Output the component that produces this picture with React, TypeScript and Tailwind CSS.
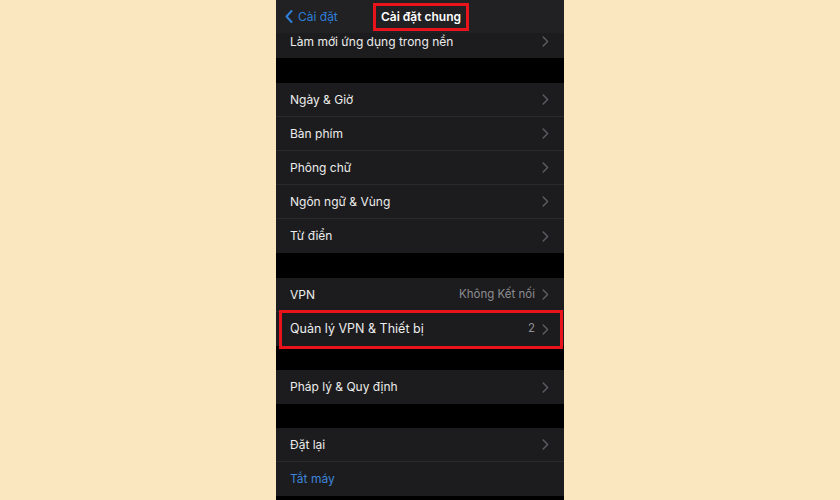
import React from "react";

const Chevron = () => (
  <svg width="7" height="11" viewBox="0 0 7 11" className="shrink-0">
    <path d="M1.2 1 L5.6 5.5 L1.2 10" fill="none" stroke="#5c5c60" strokeWidth="1.5" strokeLinecap="round" strokeLinejoin="round" />
  </svg>
);

function Row({ label, value, last, blue, h = "h-[34px]", align = "items-center", big }: { label: string; value?: string; last?: boolean; blue?: boolean; h?: string; align?: string; big?: boolean }) {
  return (
    <div className={`flex ${align} ${h} pl-[14px] pr-[15px] ${last ? "" : "border-b border-[#2a2a2c]"}`}>
      <span className={`flex-1 ${big ? "text-[12.5px]" : "text-[12px]"} ${blue ? "text-[#3d84d8]" : "text-[#ececec]"}`}>{label}</span>
      {value && <span className="text-[11.5px] text-[#8d8d92] mr-[7px]">{value}</span>}
      {!blue && <Chevron />}
    </div>
  );
}

export default function App() {
  return (
    <div className="w-[840px] h-[500px] bg-[#fbe7bf] flex justify-center overflow-hidden" style={{ fontFamily: "Inter, 'Noto Sans', sans-serif" }}>
      <div className="w-[288px] h-[500px] bg-black flex flex-col">
        {/* header */}
        <div className="h-[33px] bg-[#212123] flex items-center relative shrink-0">
          <div className="flex items-center pl-[9px] text-[#2f7fd9] text-[12px] gap-[5px]">
            <svg width="8" height="13" viewBox="0 0 8 13">
              <path d="M6.5 1 L1.5 6.5 L6.5 12" fill="none" stroke="#2f7fd9" strokeWidth="2" strokeLinecap="round" strokeLinejoin="round" />
            </svg>
            <span>Cài đặt</span>
          </div>
          <div className="absolute left-[97px] top-[3px] w-[96px] h-[28px] border-[3px] border-[#e8131b] flex items-center justify-center">
            <span className="text-[12px] font-semibold text-white">Cài đặt chung</span>
          </div>
        </div>
        <div className="bg-[#1c1c1e]">
          <div className="flex items-start h-[25px] pl-[14px] pr-[15px] pt-[1px]">
            <span className="flex-1 text-[12px] leading-[15px] text-[#ececec]">Làm mới ứng dụng trong nền</span>
            <div className="pt-[2px]"><Chevron /></div>
          </div>
        </div>
        <div className="h-[25px] shrink-0" />
        <div className="bg-[#1c1c1e]">
          <Row label="Ngày & Giờ" />
          <Row label="Bàn phím" />
          <Row label="Phông chữ" />
          <Row label="Ngôn ngữ & Vùng" />
          <Row label="Từ điển" last />
        </div>
        <div className="h-[25px] shrink-0" />
        <div className="bg-[#1c1c1e]">
          <Row label="VPN" value="Không Kết nối" />
          <div className="relative">
            <Row label="Quản lý VPN & Thiết bị" value="2" last big />
            <div className="absolute left-[3px] right-[1px] top-[-2px] bottom-[-3px] border-[3px] border-[#e8131b] pointer-events-none" />
          </div>
        </div>
        <div className="h-[24px] shrink-0" />
        <div className="bg-[#1c1c1e]">
          <Row label="Pháp lý & Quy định" last />
        </div>
        <div className="h-[24px] shrink-0" />
        <div className="bg-[#1c1c1e]">
          <Row label="Đặt lại" />
          <Row label="Tắt máy" blue last />
        </div>
      </div>
    </div>
  );
}
